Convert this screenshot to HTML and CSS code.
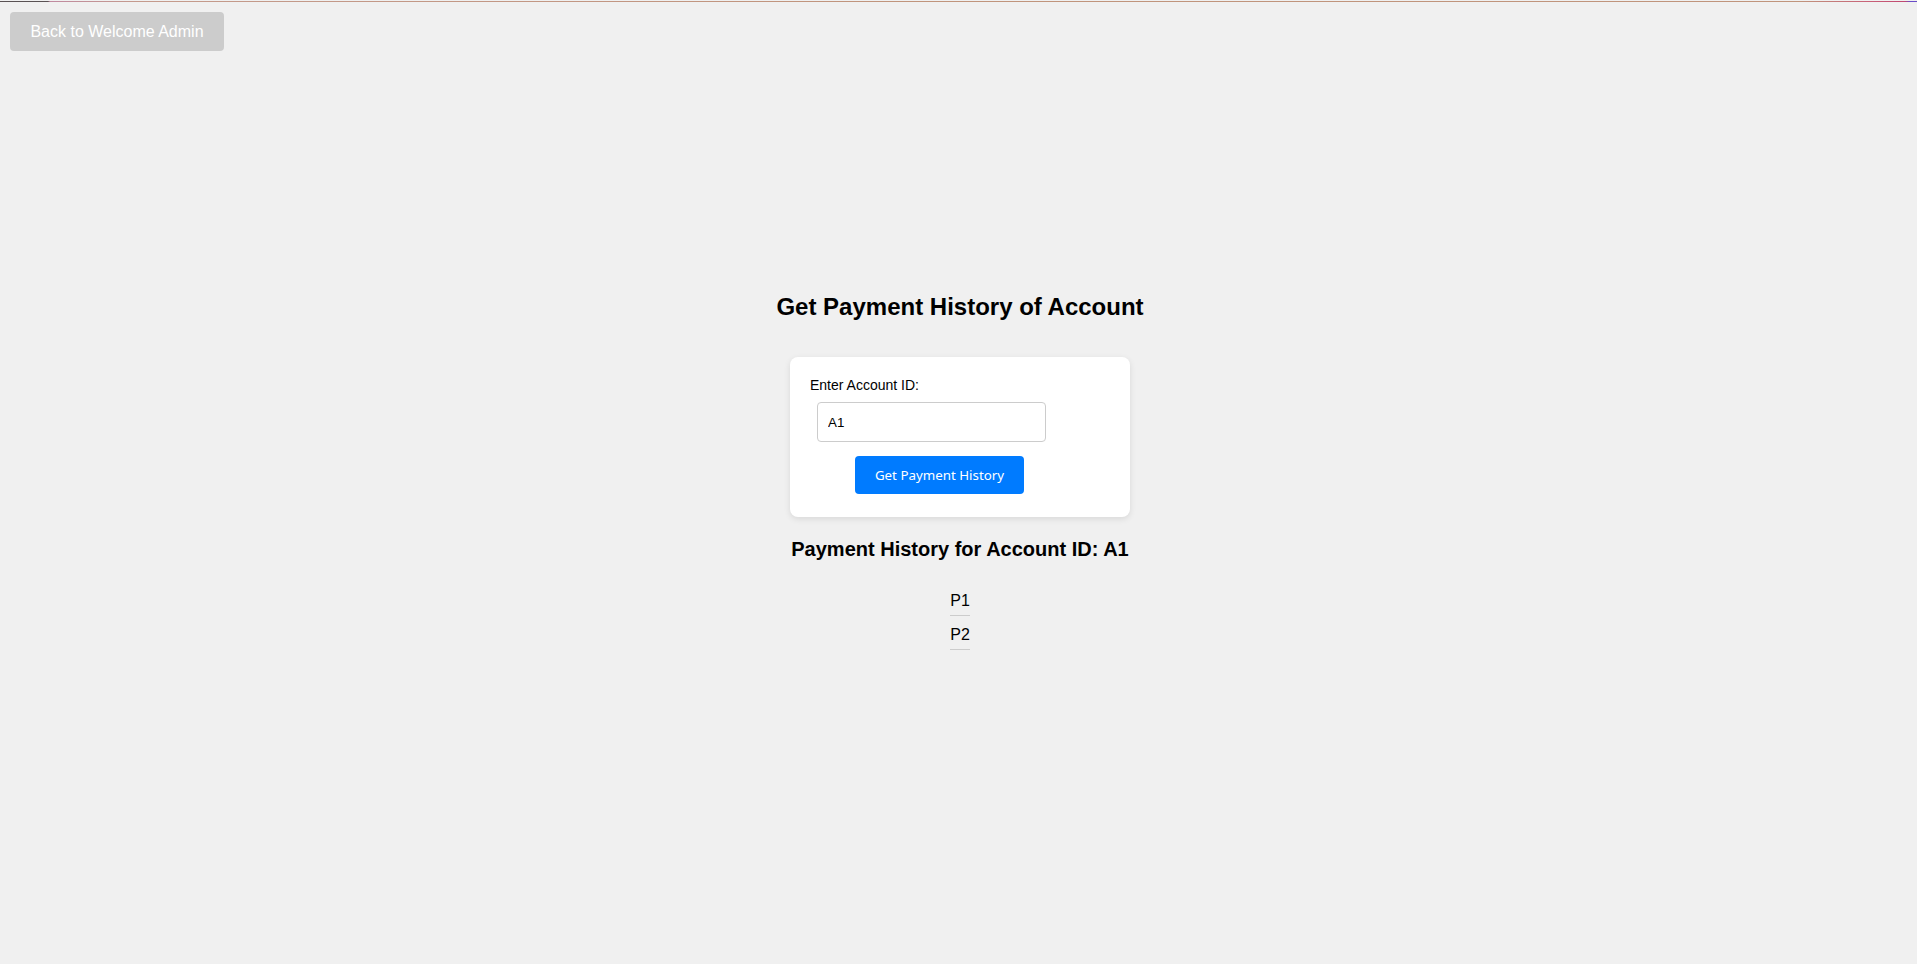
FILE: index.html
```html
<!DOCTYPE html>
<html lang="en">
<head>
<meta charset="utf-8">
<title>Get Payment History</title>
<link rel="stylesheet" href="styles.css">
</head>
<body>
<div class="topline"></div>
<header class="header">
  <button class="back-btn" type="button">Back to Welcome Admin</button>
</header>
<main class="main">
  <h2 class="title">Get Payment History of Account</h2>
  <form class="card">
    <label class="label" for="acc">Enter Account ID:</label>
    <input class="input" id="acc" type="text" value="A1">
    <button class="submit-btn" type="button">Get Payment History</button>
  </form>
  <h3 class="subtitle">Payment History for Account ID: A1</h3>
  <ul class="list">
    <li class="item">P1</li>
    <li class="item">P2</li>
  </ul>
</main>
</body>
</html>
```

FILE: styles.css
```css
html, body {
  margin: 0;
  padding: 0;
}
body {
  background: #f0f0f0;
  font-family: "Liberation Sans", Arial, sans-serif;
  color: #000;
  min-height: 100vh;
}
.topline {
  position: absolute;
  top: 1px;
  left: 0;
  right: 0;
  height: 1px;
  background: linear-gradient(to right, #5a5254 0, #5a5254 48px, #c08aa0 50px, #c49a8c 140px, #c0947c 900px, #c0947c 1800px, #c86078 1870px, #c04870 1905px, #6a4cc8 1910px, #6a4cc8 100%);
}
.header {
  padding: 12px 10px 0;
  display: flex;
}
.back-btn {
  font-family: "Liberation Sans", Arial, sans-serif;
  font-size: 16px;
  line-height: 19px;
  padding: 10px 20px;
  width: 214px;
  height: 39px;
  background: #cccccc;
  color: #ffffff;
  border: none;
  border-radius: 4px;
}
.main {
  display: flex;
  flex-direction: column;
  align-items: center;
  padding-top: 242px;
  padding-left: 3px;
}
.title {
  margin: 0;
  font-size: 24px;
  line-height: 28px;
  font-weight: bold;
}
.card {
  margin-top: 36px;
  width: 340px;
  box-sizing: border-box;
  padding: 20px 20px 23px;
  background: #ffffff;
  border-radius: 8px;
  box-shadow: 0 2px 6px rgba(0, 0, 0, 0.1);
  display: flex;
  flex-direction: column;
  align-items: flex-start;
}
.label {
  display: block;
  font-size: 14px;
  line-height: 16px;
}
.input {
  margin: 9px 0 0 7px;
  width: 229px;
  height: 40px;
  box-sizing: border-box;
  padding: 0 10px;
  border: 1px solid #cccccc;
  border-radius: 4px;
  font-family: "Liberation Sans", Arial, sans-serif;
  font-size: 13.333px;
  color: #000;
  background: #fff;
}
.submit-btn {
  margin: 14px 0 0 45px;
  width: 169px;
  height: 38px;
  padding: 0;
  white-space: nowrap;
  background: #007bff;
  color: #ffffff;
  border: none;
  border-radius: 4px;
  font-family: "Noto Sans", "Open Sans", sans-serif;
  font-size: 13.333px;
}
.subtitle {
  margin: 21px 0 0;
  font-size: 20px;
  line-height: 23px;
  font-weight: bold;
}
.list {
  list-style: none;
  margin: 26px 0 0;
  padding: 0;
  display: flex;
  flex-direction: column;
  align-items: center;
  gap: 5px;
}
.item {
  font-size: 16px;
  padding: 5px 0;
  border-bottom: 1px solid #cccccc;
}
```
